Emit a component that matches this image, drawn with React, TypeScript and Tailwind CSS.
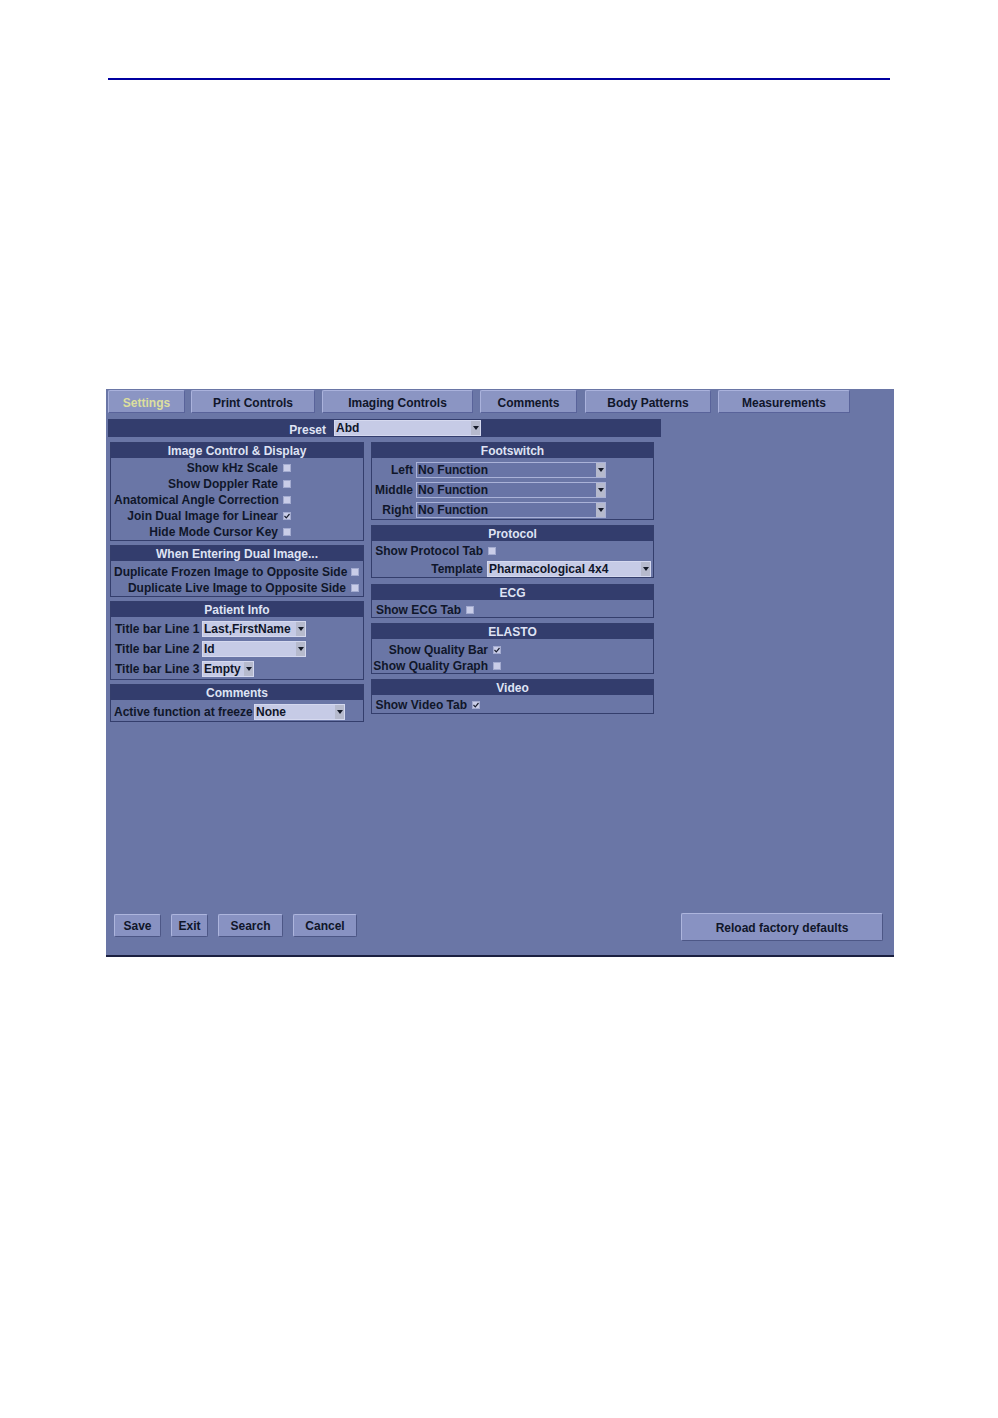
import type { ReactNode } from 'react'

const tabs = [
  { name: 'Settings', w: 'w-[77px]', ml: 'ml-[2px]', active: true },
  { name: 'Print Controls', w: 'w-[124px]', ml: 'ml-[6px]' },
  { name: 'Imaging Controls', w: 'w-[151px]', ml: 'ml-[7px]' },
  { name: 'Comments', w: 'w-[97px]', ml: 'ml-[7px]' },
  { name: 'Body Patterns', w: 'w-[126px]', ml: 'ml-[8px]' },
  { name: 'Measurements', w: 'w-[132px]', ml: 'ml-[7px]' },
]

function Check({ on }: { on?: boolean }) {
  return (
    <span className="inline-flex h-[8px] w-[8px] items-center justify-center border border-[#a3abd0] bg-[#c9cde8]">
      {on && (
        <svg width="6" height="6" viewBox="0 0 6 6">
          <path d="M0.5 3 L2.3 4.8 L5.5 1" fill="none" stroke="#1a1f30" strokeWidth="1.2" />
        </svg>
      )}
    </span>
  )
}

function Select({ value, w, dim }: { value: string; w: string; dim?: boolean }) {
  return (
    <div
      className={`flex h-[16px] ${w} border ${
        dim ? 'border-[#aab2d8] bg-[#6874a6]' : 'border-[#d5d9ef] bg-[#c6cbe6]'
      }`}
    >
      <div className="flex-1 overflow-hidden whitespace-nowrap pl-[1px] leading-[15px]">{value}</div>
      <div className="flex w-[9px] items-center justify-center bg-[#b6bacd]">
        <svg width="6" height="4" viewBox="0 0 6 4">
          <path d="M0 0 H6 L3 4 Z" fill="#151a28" />
        </svg>
      </div>
    </div>
  )
}

function Panel({ title, h, mt, children }: { title: string; h: string; mt?: string; children: ReactNode }) {
  return (
    <div className={`${h} ${mt ?? ''} border border-[#343e6c]`}>
      <div className="h-[15px] bg-[#333d6d] text-center leading-[16px] text-[#dfe3f4]">{title}</div>
      {children}
    </div>
  )
}

function CheckRow({ label, lw, on, h = 'h-[16px]' }: { label: string; lw: string; on?: boolean; h?: string }) {
  return (
    <div className={`flex ${h} items-center`}>
      <div className={`${lw} whitespace-nowrap text-right`}>{label}</div>
      <div className="ml-[5px] flex items-center">
        <Check on={on} />
      </div>
    </div>
  )
}

function Button({ label, w, h = 'h-[23px]' }: { label: string; w: string; h?: string }) {
  return (
    <div
      className={`${w} ${h} flex items-center justify-center rounded-[2px] border border-t-[#adb5dd] border-l-[#adb5dd] border-b-[#4d5786] border-r-[#4d5786] bg-[#8892c2] pt-[1px]`}
    >
      {label}
    </div>
  )
}

export default function App() {
  return (
    <div
      className="h-[1418px] w-[998px] bg-white pt-[78px] text-[12px] font-bold text-[#10162a]"
      style={{ fontFamily: '"Liberation Sans", Arial, sans-serif' }}
    >
      <div className="ml-[108px] h-[2px] w-[782px] bg-[#0000a0]" />

      <div className="ml-[106px] mt-[309px] flex h-[568px] w-[788px] flex-col border-b-2 border-[#1b2040] bg-[#6a76a6]">
        {/* tabs */}
        <div className="flex pt-[1px]">
          {tabs.map(t => (
            <div
              key={t.name}
              className={`${t.w} ${t.ml} flex h-[23px] items-center justify-center rounded-t-[2px] border border-t-[#aab2dc] border-l-[#aab2dc] border-b-[#59639a] border-r-[#59639a] bg-[#8b95c3] pt-[2px] ${
                t.active ? 'text-[#dcdf9e]' : ''
              }`}
            >
              {t.name}
            </div>
          ))}
        </div>

        {/* preset */}
        <div className="ml-[2px] mt-[6px] flex h-[18px] w-[553px] items-center bg-[#333d6d]">
          <div className="w-[218px] pt-[3px] text-right text-[#dfe3f4]">Preset</div>
          <div className="ml-[8px]">
            <Select value="Abd" w="w-[147px]" />
          </div>
        </div>

        <div className="ml-[4px] mt-[5px] flex">
          {/* left column */}
          <div className="w-[254px]">
            <Panel title="Image Control & Display" h="h-[99px]">
              <div className="pl-[3px] pt-[2px]">
                <CheckRow label="Show kHz Scale" lw="w-[164px]" />
                <CheckRow label="Show Doppler Rate" lw="w-[164px]" />
                <CheckRow label="Anatomical Angle Correction" lw="w-[164px]" />
                <CheckRow label="Join Dual Image for Linear" lw="w-[164px]" on />
                <CheckRow label="Hide Mode Cursor Key" lw="w-[164px]" />
              </div>
            </Panel>
            <Panel title="When Entering Dual Image..." h="h-[52px]" mt="mt-[4px]">
              <div className="pl-[3px] pt-[3px]">
                <CheckRow label="Duplicate Frozen Image to Opposite Side" lw="w-[232px]" />
                <CheckRow label="Duplicate Live Image to Opposite Side" lw="w-[232px]" />
              </div>
            </Panel>
            <Panel title="Patient Info" h="h-[79px]" mt="mt-[4px]">
              <div className="pl-[4px] pt-[2px]">
                {[
                  { l: 'Title bar Line 1', v: 'Last,FirstName', w: 'w-[104px]' },
                  { l: 'Title bar Line 2', v: 'Id', w: 'w-[104px]' },
                  { l: 'Title bar Line 3', v: 'Empty', w: 'w-[52px]' },
                ].map(r => (
                  <div key={r.l} className="flex h-[20px] items-center">
                    <div className="w-[87px] whitespace-nowrap">{r.l}</div>
                    <Select value={r.v} w={r.w} />
                  </div>
                ))}
              </div>
            </Panel>
            <Panel title="Comments" h="h-[38px]" mt="mt-[4px]">
              <div className="flex h-[21px] items-center pl-[3px] pt-[2px]">
                <div className="w-[140px] whitespace-nowrap">Active function at freeze</div>
                <Select value="None" w="w-[91px]" />
              </div>
            </Panel>
          </div>

          {/* right column */}
          <div className="ml-[7px] w-[283px]">
            <Panel title="Footswitch" h="h-[78px]">
              <div className="pl-[1px] pt-[2px]">
                {['Left', 'Middle', 'Right'].map(l => (
                  <div key={l} className="flex h-[20px] items-center">
                    <div className="w-[40px] text-right">{l}</div>
                    <div className="ml-[3px]">
                      <Select value="No Function" w="w-[190px]" dim />
                    </div>
                  </div>
                ))}
              </div>
            </Panel>
            <Panel title="Protocol" h="h-[53px]" mt="mt-[5px]">
              <div className="pl-[1px] pt-[2px]">
                <CheckRow label="Show Protocol Tab" lw="w-[110px]" />
                <div className="flex h-[20px] items-center">
                  <div className="w-[110px] text-right">Template</div>
                  <div className="ml-[4px]">
                    <Select value="Pharmacological 4x4" w="w-[164px]" />
                  </div>
                </div>
              </div>
            </Panel>
            <Panel title="ECG" h="h-[34px]" mt="mt-[6px]">
              <div className="pl-[1px] pt-[2px]">
                <CheckRow label="Show ECG Tab" lw="w-[88px]" />
              </div>
            </Panel>
            <Panel title="ELASTO" h="h-[51px]" mt="mt-[5px]">
              <div className="pl-[1px] pt-[3px]">
                <CheckRow label="Show Quality Bar" lw="w-[115px]" on />
                <CheckRow label="Show Quality Graph" lw="w-[115px]" />
              </div>
            </Panel>
            <Panel title="Video" h="h-[35px]" mt="mt-[5px]">
              <div className="pl-[1px] pt-[2px]">
                <CheckRow label="Show Video Tab" lw="w-[94px]" on />
              </div>
            </Panel>
          </div>
        </div>

        {/* bottom buttons */}
        <div className="mb-[14px] mt-auto flex items-start">
          <div className="ml-[8px] mt-[1px] flex gap-[10px]">
            <Button label="Save" w="w-[47px]" />
            <Button label="Exit" w="w-[37px]" />
            <Button label="Search" w="w-[65px]" />
            <Button label="Cancel" w="w-[64px]" />
          </div>
          <div className="ml-auto mr-[11px]">
            <Button label="Reload factory defaults" w="w-[202px]" h="h-[28px]" />
          </div>
        </div>
      </div>
    </div>
  )
}
